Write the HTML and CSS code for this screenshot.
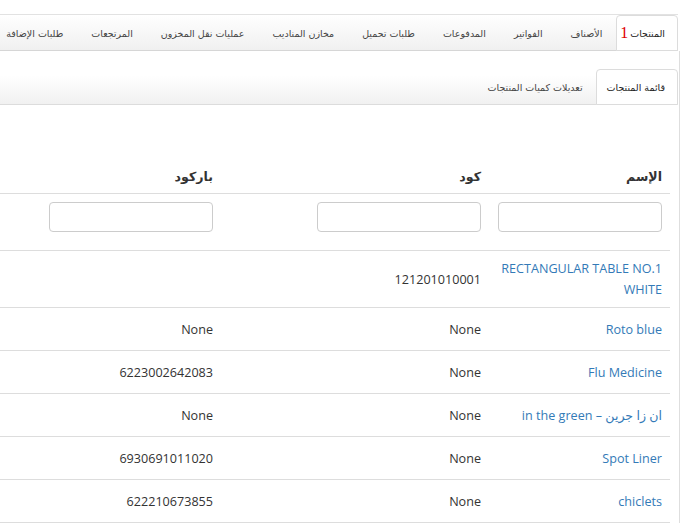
FILE: index.html
```html
<!DOCTYPE html>
<html lang="ar" dir="rtl">
<head>
<meta charset="utf-8">
<title>المنتجات</title>
<link rel="stylesheet" href="styles.css">
</head>
<body>
<div class="page">
  <ul class="tabs main-tabs">
    <li class="tab active first"><span class="tab-label">المنتجات</span><span class="tab-num">1</span></li>
    <li class="tab">الأصناف</li>
    <li class="tab">الفواتير</li>
    <li class="tab">المدفوعات</li>
    <li class="tab">طلبات تحميل</li>
    <li class="tab">مخازن المناديب</li>
    <li class="tab">عمليات نقل المخزون</li>
    <li class="tab">المرتجعات</li>
    <li class="tab">طلبات الإضافة</li>
  </ul>
  <div class="panel">
    <ul class="tabs sub-tabs">
      <li class="tab active">قائمة المنتجات</li>
      <li class="tab">تعديلات كميات المنتجات</li>
    </ul>
    <div class="content">
      <table class="grid">
        <thead>
          <tr class="head-row">
            <th class="c-name">الإسم</th>
            <th class="c-code">كود</th>
            <th class="c-bar">باركود</th>
            <th class="c-rest"></th>
          </tr>
        </thead>
        <tbody>
          <tr class="filter-row">
            <td><input class="filter" type="text"></td>
            <td><input class="filter" type="text"></td>
            <td><input class="filter" type="text"></td>
            <td></td>
          </tr>
          <tr class="data">
            <td><a class="link" href="#">RECTANGULAR TABLE NO.1 WHITE</a></td>
            <td>121201010001</td>
            <td></td>
            <td></td>
          </tr>
          <tr class="data">
            <td><a class="link" href="#">Roto blue</a></td>
            <td>None</td>
            <td>None</td>
            <td></td>
          </tr>
          <tr class="data">
            <td><a class="link" href="#">Flu Medicine</a></td>
            <td>None</td>
            <td>6223002642083</td>
            <td></td>
          </tr>
          <tr class="data">
            <td><a class="link" href="#">ان زا جرين – in the green</a></td>
            <td>None</td>
            <td>None</td>
            <td></td>
          </tr>
          <tr class="data">
            <td><a class="link" href="#">Spot Liner</a></td>
            <td>None</td>
            <td>6930691011020</td>
            <td></td>
          </tr>
          <tr class="data">
            <td><a class="link" href="#">chiclets</a></td>
            <td>None</td>
            <td>622210673855</td>
            <td></td>
          </tr>
        </tbody>
      </table>
    </div>
  </div>
</div>
</body>
</html>
```

FILE: styles.css
```css
html {
  overflow: hidden;
}
body {
  margin: 0;
  background: #fff;
  direction: rtl;
  font-family: "Open Sans", "DejaVu Sans", sans-serif;
  color: #333;
}
.page {
  width: 1100px;
  margin-right: 15px;
  padding-top: 14px;
}
.tabs {
  list-style: none;
  margin: 0;
  padding: 0;
  display: flex;
  align-items: flex-start;
  font-family: "DejaVu Sans", sans-serif;
  font-size: 9.5px;
  color: #444;
}
.tab {
  box-sizing: border-box;
  height: 36px;
  padding: 0 13px;
  display: flex;
  align-items: center;
  white-space: nowrap;
  border: 1px solid transparent;
  border-radius: 4px 4px 0 0;
}
.tab.active {
  background: #fff;
  border-color: #dcdcdc;
  color: #222;
  margin-bottom: -1px;
}
.main-tabs {
  height: 35px;
  border-top: 1px solid #e2e2e2;
  border-bottom: 1px solid #d6d6d6;
  background: linear-gradient(#ffffff, #f0f0f0);
}
.main-tabs .tab.first {
  padding: 0 12px 0 3px;
}
.tab-num {
  font-family: "Liberation Serif", serif;
  font-size: 16px;
  color: #e00000;
  margin-right: 2px;
}
.panel {
  margin-right: -2px;
  border-right: 1px solid #dedede;
}
.sub-tabs {
  height: 35px;
  padding-top: 18px;
  margin-right: 1px;
  border-bottom: 1px solid #dcdcdc;
  background: linear-gradient(#ffffff 45%, #f1f1f1);
}
.sub-tabs .tab {
  padding: 0 12px 0 10px;
}
.content {
  padding: 56px 9px 0 0;
}
.grid {
  border-collapse: separate;
  border-spacing: 0;
  width: 1060px;
  font-size: 12.6px;
  table-layout: fixed;
  border-bottom: 1px solid #dddddd;
}
.c-name { width: 165px; }
.c-code { width: 252px; }
.c-bar { width: 252px; }
.grid th {
  text-align: right;
  font-weight: bold;
  padding: 6px 8px;
  line-height: 20px;
  border-bottom: 1px solid #dddddd;
  vertical-align: bottom;
}
.filter-row td {
  padding: 8px 8px 18px;
  vertical-align: top;
}
.filter {
  box-sizing: border-box;
  display: block;
  width: 164px;
  height: 30px;
  border: 1px solid #cccccc;
  border-radius: 4px;
  background: #fff;
  padding: 0 8px;
  margin: 0;
}
.data {
  height: 43px;
}
.data td {
  padding: 7px 8px;
  line-height: 21px;
  border-top: 1px solid #dddddd;
  vertical-align: middle;
  text-align: right;
}
.link {
  color: #337ab7;
  text-decoration: none;
}
```
